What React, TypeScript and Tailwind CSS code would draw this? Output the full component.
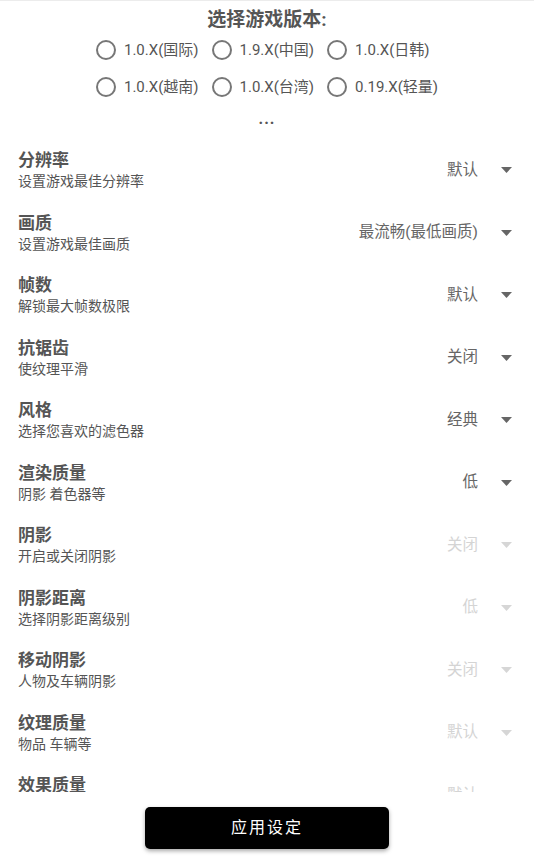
import React from 'react';

const versions = [
    ['1.0.X(国际)', '1.9.X(中国)', '1.0.X(日韩)'],
    ['1.0.X(越南)', '1.0.X(台湾)', '0.19.X(轻量)'],
];

interface Setting {
    title: string;
    desc: string;
    value: string;
    disabled?: boolean;
}

const settings: Setting[] = [
    { title: '分辨率', desc: '设置游戏最佳分辨率', value: '默认' },
    { title: '画质', desc: '设置游戏最佳画质', value: '最流畅(最低画质)' },
    { title: '帧数', desc: '解锁最大帧数极限', value: '默认' },
    { title: '抗锯齿', desc: '使纹理平滑', value: '关闭' },
    { title: '风格', desc: '选择您喜欢的滤色器', value: '经典' },
    { title: '渲染质量', desc: '阴影 着色器等', value: '低' },
    { title: '阴影', desc: '开启或关闭阴影', value: '关闭', disabled: true },
    { title: '阴影距离', desc: '选择阴影距离级别', value: '低', disabled: true },
    { title: '移动阴影', desc: '人物及车辆阴影', value: '关闭', disabled: true },
    { title: '纹理质量', desc: '物品 车辆等', value: '默认', disabled: true },
    { title: '效果质量', desc: '特效 粒子等', value: '默认', disabled: true },
];

const font = { fontFamily: 'Roboto, "Noto Sans CJK SC", sans-serif' };

function Caret({ disabled }: { disabled?: boolean }) {
    return (
        <svg width="11" height="6" viewBox="0 0 11 6" className={disabled ? 'text-[#d6d6d6]' : 'text-[#666]'}>
            <path d="M0 0h11L5.5 6z" fill="currentColor" />
        </svg>
    );
}

export default function App() {
    return (
        <div className="h-[865px] w-[534px] bg-white flex flex-col overflow-hidden border-t border-[#ececec]" style={font}>
            <div className="flex flex-col items-center pt-[6px]">
                <div className="text-[19px] leading-[26px] font-bold text-[#555]">选择游戏版本:</div>
                <div className="flex flex-col items-start gap-[11px] mt-[4px] w-fit">
                    {versions.map((row, i) => (
                        <div key={i} className="flex items-center gap-[13px] h-[26px]">
                            {row.map((v) => (
                                <label key={v} className="flex items-center gap-[8px] shrink-0">
                                    <span className="w-[20px] h-[20px] shrink-0 rounded-full border-2 border-[#777]" />
                                    <span className="text-[15px] text-[#555] whitespace-nowrap">{v}</span>
                                </label>
                            ))}
                        </div>
                    ))}
                </div>
                <div className="mt-[10px] text-[16px] leading-[18px] font-bold text-[#555] tracking-[1px]">...</div>
            </div>

            <div className="flex-1 overflow-hidden mt-[11px]">
                {settings.map((s) => (
                    <div key={s.title} className="flex items-center pl-[18px] pr-[22px] py-[10px]">
                        <div className="flex-1">
                            <div className="text-[17px] leading-[22px] font-bold text-[#555]">{s.title}</div>
                            <div className="text-[14px] leading-[20.5px] text-[#555]">{s.desc}</div>
                        </div>
                        <div className={`text-[15.5px] whitespace-nowrap ${s.disabled ? 'text-[#d4d4d4]' : 'text-[#666]'}`}>{s.value}</div>
                        <div className="ml-[23px] flex items-center">
                            <Caret disabled={s.disabled} />
                        </div>
                    </div>
                ))}
            </div>

            <div className="flex justify-center pt-[15px] pb-[16px] bg-white">
                <button className="w-[244px] h-[42px] rounded-[5px] bg-black text-white text-[16px] tracking-[2px] shadow-[0_2px_4px_rgba(0,0,0,0.35)]">
                    应用设定
                </button>
            </div>
        </div>
    );
}
